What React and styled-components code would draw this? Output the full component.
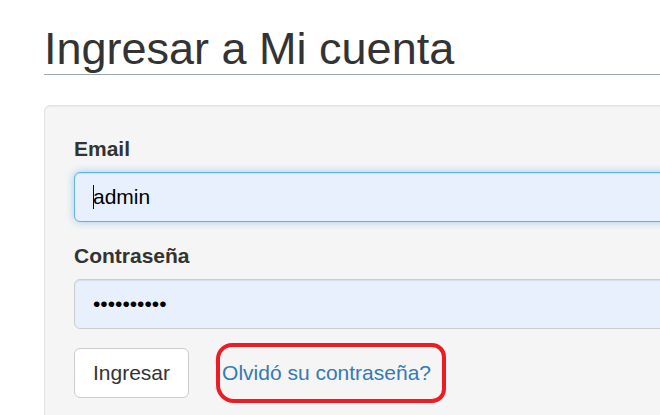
import React from "react";
import styled, { createGlobalStyle } from "styled-components";

const GlobalStyle = createGlobalStyle`
  html, body {
    margin: 0;
    padding: 0;
    background: #fff;
    overflow: hidden;
  }
  body {
    font-family: "Liberation Sans", Arial, sans-serif;
    font-size: 21px;
    line-height: 30px;
    color: #333;
  }
`;

const Page = styled.div`
  width: 760px;
  padding-left: 44px;
`;

const Title = styled.h2`
  margin: 24px 0 30px;
  padding: 0;
  font-size: 45px;
  line-height: 50px;
  font-weight: 400;
  color: #333;
  border-bottom: 1px solid #9ea7b3;
`;

const Well = styled.form`
  background: #f5f5f5;
  border: 1px solid #e3e3e3;
  border-radius: 6px;
  box-shadow: inset 0 1px 1px rgba(0, 0, 0, 0.05);
  padding: 28px 29px 40px;
`;

const Group = styled.div`
  margin-bottom: 19px;
`;

const Label = styled.label`
  display: block;
  margin-bottom: 8px;
  font-weight: 700;
  font-size: 21px;
  line-height: 30px;
  color: #333;
`;

const FieldWrap = styled.div`
  position: relative;
`;

const Input = styled.input`
  display: block;
  box-sizing: border-box;
  width: 100%;
  height: 50px;
  padding: 9px 18px;
  font-family: "Liberation Sans", Arial, sans-serif;
  font-size: 21px;
  color: #000;
  background: #e8f0fe;
  border: 1px solid ${(p) => (p.$focused ? "#66afe9" : "#ccc")};
  border-radius: 6px;
  outline: none;
  box-shadow: ${(p) =>
    p.$focused
      ? "inset 0 1px 1px rgba(0,0,0,.075), 0 0 8px rgba(102,175,233,.6)"
      : "inset 0 1px 1px rgba(0,0,0,.075)"};
  caret-color: transparent;
`;

const Caret = styled.span`
  position: absolute;
  left: 19px;
  top: 13px;
  width: 1px;
  height: 24px;
  background: #000;
`;

const Actions = styled.div`
  display: flex;
  align-items: center;
  gap: 27px;
  height: 50px;
`;

const Button = styled.button`
  box-sizing: border-box;
  height: 50px;
  padding: 0 18px;
  font-family: "Liberation Sans", Arial, sans-serif;
  font-size: 21px;
  color: #333;
  background: #fff;
  border: 1px solid #ccc;
  border-radius: 6px;
`;

const Highlight = styled.span`
  display: flex;
  align-items: center;
  box-sizing: border-box;
  height: 60px;
  padding: 0 11px 0 2px;
  border: 4px solid #ed1c24;
  border-radius: 16px 14px 14px 18px;
`;

const ForgotLink = styled.a`
  color: #337ab7;
  text-decoration: none;
  font-size: 21px;
  line-height: 30px;
`;

export default function App() {
  return (
    <>
      <GlobalStyle />
      <Page>
        <Title>Ingresar a Mi cuenta</Title>
        <Well onSubmit={(e) => e.preventDefault()}>
          <Group>
            <Label htmlFor="email">Email</Label>
            <FieldWrap>
              <Input id="email" type="text" defaultValue="admin" $focused readOnly />
              <Caret />
            </FieldWrap>
          </Group>
          <Group>
            <Label htmlFor="password">Contraseña</Label>
            <Input id="password" type="password" defaultValue="1234567890" readOnly />
          </Group>
          <Actions>
            <Button type="submit">Ingresar</Button>
            <Highlight>
              <ForgotLink href="#">Olvidó su contraseña?</ForgotLink>
            </Highlight>
          </Actions>
        </Well>
      </Page>
    </>
  );
}
